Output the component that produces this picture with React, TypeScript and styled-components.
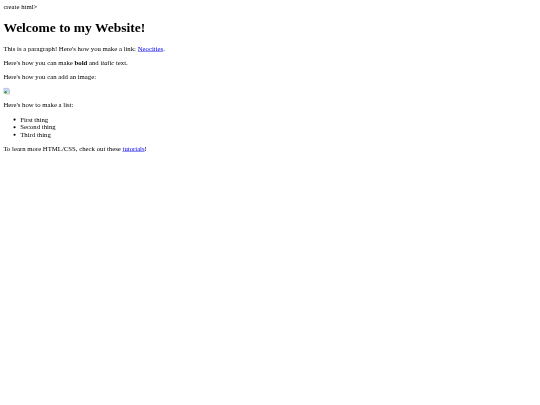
import styled, { createGlobalStyle } from "styled-components";

const GlobalStyle = createGlobalStyle`
  html, body {
    margin: 0;
    height: 100%;
    overflow: hidden;
    background: #ffffff;
  }
`;

// the page is a 1280px wide document shrunk down to the 540px window
const Page = styled.div`
  width: 1280px;
  padding: 8px;
  box-sizing: border-box;
  transform: scale(0.421875);
  transform-origin: top left;
  filter: blur(0.25px);
  font-family: "Liberation Serif", "Times New Roman", serif;
  font-size: 16px;
  color: #000000;
`;

const Heading = styled.h1`
  font-size: 2em;
  font-weight: bold;
  margin: 0.67em 0;
`;

const Paragraph = styled.p`
  margin: 1em 0;
`;

const TextLink = styled.a`
  color: #0000ee;
  text-decoration: underline;
`;

const BrokenImage = styled.svg`
  display: block;
  width: 16px;
  height: 16px;
`;

const List = styled.ul`
  margin: 1em 0;
  padding-left: 40px;
`;

const BrokenImageIcon = () => (
  <BrokenImage viewBox="0 0 16 16">
    <path d="M.5 .5h10l5 5v4l-3 2-3-2-3 3-3-1-3 2z" fill="#c8d7f5" stroke="#8f9db0" />
    <path d="M1 11l4-4 4 3-3 4-3-1z" fill="#3f9e3a" />
    <path d="M7 15.5l2-3 3 1 3.5-2v4z" fill="#dfeacf" stroke="#a0ad9c" />
  </BrokenImage>
);

export default function App() {
  return (
    <Page>
      <GlobalStyle />
      create html&gt;
      <Heading>Welcome to my Website!</Heading>
      <Paragraph>
        This is a paragraph! Here's how you make a link: <TextLink href="#">Neocities</TextLink>.
      </Paragraph>
      <Paragraph>
        Here's how you can make <strong>bold</strong> and <em>italic</em> text.
      </Paragraph>
      <Paragraph>Here's how you can add an image:</Paragraph>
      <BrokenImageIcon />
      <Paragraph>Here's how to make a list:</Paragraph>
      <List>
        <li>First thing</li>
        <li>Second thing</li>
        <li>Third thing</li>
      </List>
      <Paragraph>
        To learn more HTML/CSS, check out these <TextLink href="#">tutorials</TextLink>!
      </Paragraph>
    </Page>
  );
}
